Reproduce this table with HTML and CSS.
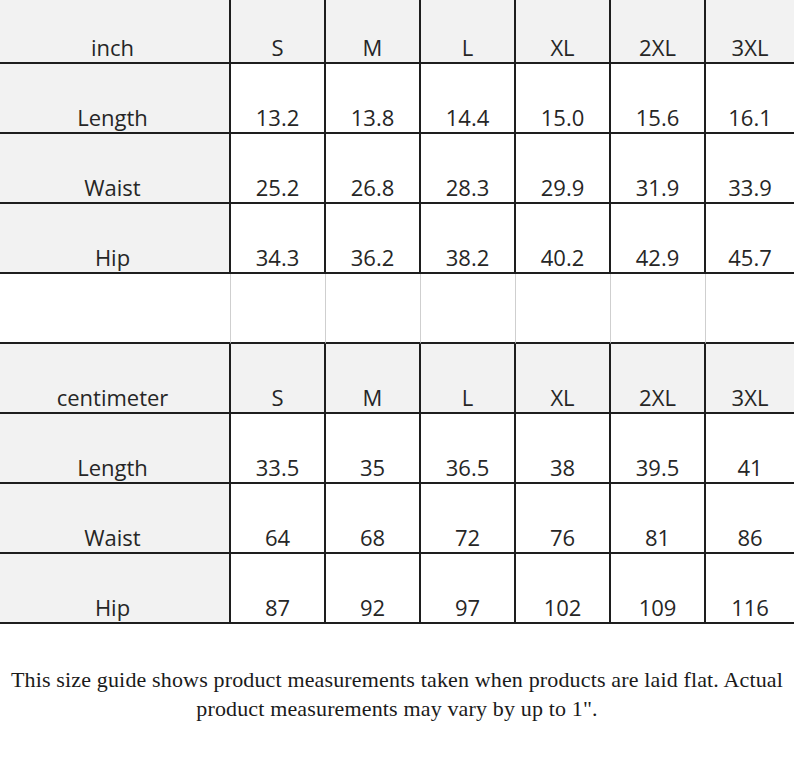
FILE: index.html
```html
<!DOCTYPE html>
<html lang="en">
<head>
<meta charset="utf-8">
<title>Size guide</title>
<link rel="stylesheet" href="styles.css">
</head>
<body>
<div class="sheet">
  <div class="row head first">
    <div class="cell label">inch</div>
    <div class="cell">S</div><div class="cell">M</div><div class="cell">L</div>
    <div class="cell">XL</div><div class="cell">2XL</div><div class="cell">3XL</div>
  </div>
  <div class="row">
    <div class="cell label">Length</div>
    <div class="cell">13.2</div><div class="cell">13.8</div><div class="cell">14.4</div>
    <div class="cell">15.0</div><div class="cell">15.6</div><div class="cell">16.1</div>
  </div>
  <div class="row">
    <div class="cell label">Waist</div>
    <div class="cell">25.2</div><div class="cell">26.8</div><div class="cell">28.3</div>
    <div class="cell">29.9</div><div class="cell">31.9</div><div class="cell">33.9</div>
  </div>
  <div class="row">
    <div class="cell label">Hip</div>
    <div class="cell">34.3</div><div class="cell">36.2</div><div class="cell">38.2</div>
    <div class="cell">40.2</div><div class="cell">42.9</div><div class="cell">45.7</div>
  </div>
  <div class="row blank">
    <div class="cell"></div><div class="cell"></div><div class="cell"></div><div class="cell"></div>
    <div class="cell"></div><div class="cell"></div><div class="cell"></div>
  </div>
  <div class="row head">
    <div class="cell label">centimeter</div>
    <div class="cell">S</div><div class="cell">M</div><div class="cell">L</div>
    <div class="cell">XL</div><div class="cell">2XL</div><div class="cell">3XL</div>
  </div>
  <div class="row">
    <div class="cell label">Length</div>
    <div class="cell">33.5</div><div class="cell">35</div><div class="cell">36.5</div>
    <div class="cell">38</div><div class="cell">39.5</div><div class="cell">41</div>
  </div>
  <div class="row">
    <div class="cell label">Waist</div>
    <div class="cell">64</div><div class="cell">68</div><div class="cell">72</div>
    <div class="cell">76</div><div class="cell">81</div><div class="cell">86</div>
  </div>
  <div class="row">
    <div class="cell label">Hip</div>
    <div class="cell">87</div><div class="cell">92</div><div class="cell">97</div>
    <div class="cell">102</div><div class="cell">109</div><div class="cell">116</div>
  </div>
</div>
<p class="note">This size guide shows product measurements taken when products are laid flat. Actual product measurements may vary by up to 1".</p>
</body>
</html>
```

FILE: styles.css
```css
html, body {
  margin: 0;
  padding: 0;
  background: #ffffff;
}

.sheet {
  width: 794px;
  overflow: hidden;
  font-family: "Open Sans", "Noto Sans", sans-serif;
  font-size: 22px;
  color: #262626;
}

.row {
  display: grid;
  grid-template-columns: 231px repeat(5, 95px) 1fr;
  height: 70px;
}

.row.first {
  height: 64px;
}

.cell {
  box-sizing: border-box;
  display: flex;
  align-items: flex-end;
  justify-content: center;
  line-height: 30px;
  border-right: 2px solid #1e1e1e;
  border-bottom: 2px solid #1e1e1e;
  background: #ffffff;
}

.cell:last-child {
  border-right: none;
}

.label {
  background: #f2f2f2;
  padding-right: 4px;
}

.head .cell {
  background: #f2f2f2;
}

.blank .cell {
  background: #ffffff;
  border-right: 1px solid #cfcfcf;
  padding-right: 1px;
}

.blank .cell:last-child {
  border-right: none;
}

.note {
  margin: 42px 0 0;
  padding: 0 4px;
  font-family: "Liberation Serif", "Times New Roman", serif;
  font-size: 22px;
  letter-spacing: 0.15px;
  line-height: 28.5px;
  color: #1a1a1a;
  text-align: center;
}
```
